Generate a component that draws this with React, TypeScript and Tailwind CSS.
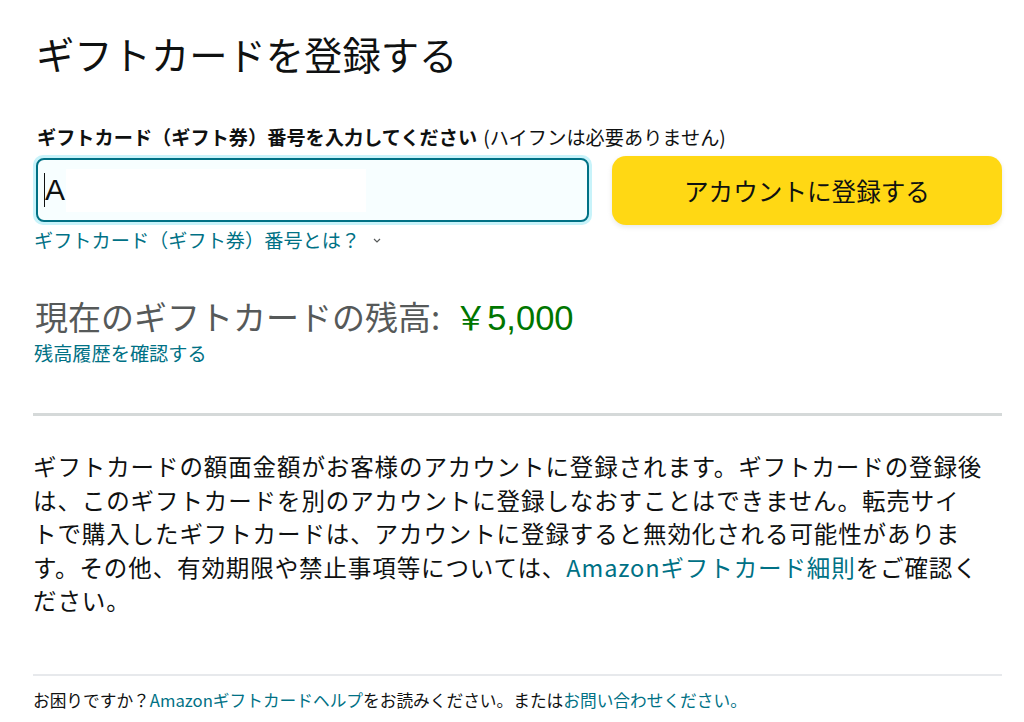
const font = { fontFamily: '"Noto Sans CJK JP", "Noto Sans", sans-serif' };
const latin = { fontFamily: '"Liberation Sans", Arial, sans-serif' };

export default function App() {
  return (
    <div className="min-h-[722px] bg-white pl-[33px] pr-[22px] pt-[26px] text-[#0f1111]" style={font}>
      <h1 className="pl-[3px] text-[38.3px] leading-[56px] font-normal">ギフトカードを登録する</h1>

      <div className="mt-[42px]">
        <label className="block pl-[4px] text-[19.2px] leading-[26px]">
          <span className="font-bold">ギフトカード（ギフト券）番号を入力してください</span>
          <span className="ml-[6px]">(ハイフンは必要ありません)</span>
        </label>

        <div className="mt-[5px] flex items-center gap-[20px]">
          <div className="h-[70px] w-[559px] shrink-0 rounded-[10px] bg-[#c8f3fa] p-[3px]">
            <div className="flex h-full items-center rounded-[8px] border-2 border-[#007185] bg-[#f7feff] pl-[6px]">
              <span className="h-[34px] w-px bg-[#0f1111]" />
              <span className="text-[30px] leading-none text-[#0f1111]" style={latin}>
                A
              </span>
              <div className="ml-[1px] h-[43px] w-[300px] bg-white" />
            </div>
          </div>

          <button className="h-[69px] w-[390px] shrink-0 rounded-[14px] bg-[#ffd814] text-[24.6px] text-[#0f1111] shadow-[0_2px_5px_rgba(213,217,217,0.6)]">
            アカウントに登録する
          </button>
        </div>

        <a className="mt-[2px] flex items-center gap-[12px] pl-[1px] text-[19.2px] leading-[26px] text-[#007185]">
          ギフトカード（ギフト券）番号とは？
          <svg width="10" height="7" viewBox="0 0 10 7" fill="none" stroke="#565959" strokeWidth="1.2">
            <path d="M2 2l3 3 3-3" />
          </svg>
        </a>
      </div>

      <div className="mt-[41px]">
        <div className="pl-[2px] text-[33px] leading-[44px] text-[#565959]">
          現在のギフトカードの残高:
          <span className="ml-[14px] text-[#007600]">
            ￥<span className="text-[34.5px]" style={latin}>5,000</span>
          </span>
        </div>
        <a className="block pl-[1px] text-[19.2px] leading-[26px] text-[#007185]">残高履歴を確認する</a>
      </div>

      <hr className="mt-[47px] border-t-[3px] border-[#d5d9d9]" />

      <p className="mt-[34px] whitespace-nowrap text-[23.5px] leading-[33.5px] tracking-[0.9px]">
        ギフトカードの額面金額がお客様のアカウントに登録されます。ギフトカードの登録後
        <br />
        は、このギフトカードを別のアカウントに登録しなおすことはできません。転売サイ
        <br />
        トで購入したギフトカードは、アカウントに登録すると無効化される可能性がありま
        <br />
        す。その他、有効期限や禁止事項等については、<a className="text-[#007185]">Amazonギフトカード細則</a>をご確認く
        <br />
        ださい。
      </p>

      <hr className="mt-[56px] border-t-2 border-[#e7e9ec]" />

      <p className="mt-[12px] text-[16.7px] leading-[24px]">
        お困りですか？<a className="text-[#007185]">Amazonギフトカードヘルプ</a>をお読みください。または
        <a className="text-[#007185]">お問い合わせください。</a>
      </p>
    </div>
  );
}
